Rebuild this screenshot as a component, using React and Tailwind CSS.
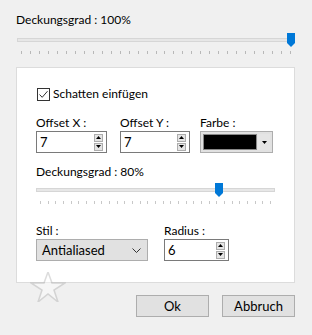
import React from "react";

function Slider({ width, thumbLeft, ticks, tickColor }) {
  const n = ticks;
  return (
    <div className="relative h-[22px]" style={{ width }}>
      <div className="absolute left-0 right-0 top-[5px] h-[4px] bg-[#e7e7e7] border border-[#d6d6d6]" />
      <svg className="absolute top-0" style={{ left: thumbLeft }} width="8" height="14" viewBox="0 0 8 14">
        <path d="M0 0H8V10L4 14L0 10Z" fill="#0078d7" />
      </svg>
      {Array.from({ length: n + 1 }).map((_, i) => (
        <div
          key={i}
          className={"absolute top-[18px] w-px h-[3px] " + tickColor}
          style={{ left: 4 + Math.round(((width - 9) * i) / n) }}
        />
      ))}
    </div>
  );
}

function Spinner() {
  return (
    <div className="flex flex-col gap-px">
      <div className="w-[9px] h-[8px] border border-[#adadad] bg-[#e5e5e5] flex items-center justify-center">
        <svg width="5" height="3" viewBox="0 0 5 3"><path d="M2.5 0L5 3H0Z" fill="#000" /></svg>
      </div>
      <div className="w-[9px] h-[8px] border border-[#adadad] bg-[#e5e5e5] flex items-center justify-center">
        <svg width="5" height="3" viewBox="0 0 5 3"><path d="M0 0H5L2.5 3Z" fill="#000" /></svg>
      </div>
    </div>
  );
}

function NumField({ label, value, width }) {
  return (
    <div className="flex flex-col">
      <span className="leading-4">{label}</span>
      <div
        className="h-[22px] border border-[#7a7a7a] bg-white flex items-center justify-between pl-[3px] pr-[3px]"
        style={{ width }}
      >
        <span className="leading-4 text-[13px]">{value}</span>
        <Spinner />
      </div>
    </div>
  );
}

export default function App() {
  return (
    <div className="relative w-[312px] h-[335px] bg-[#f0f0f0] text-[12px] text-black font-['Lato',sans-serif] pl-4 pt-3 overflow-hidden">
      <div className="leading-4">Deckungsgrad : 100%</div>
      <div className="mt-[5px] ml-px">
        <Slider width={278} thumbLeft={270} ticks={30} tickColor="bg-[#b8b8b8]" />
      </div>

      {/* Panel */}
      <div className="mt-[12px] w-[279px] h-[216px] bg-white border border-[#dcdcdc] pl-[19px] pt-[18px]">
        <div className="flex items-center gap-[3px] h-4 ml-px">
          <div className="w-[13px] h-[13px] border border-[#333] bg-white flex items-center justify-center">
            <svg width="11" height="11" viewBox="0 0 11 11">
              <path d="M1.5 5.5L4.2 8.3L9.5 2.2" fill="none" stroke="#333" strokeWidth="1" />
            </svg>
          </div>
          <span className="leading-4">Schatten einfügen</span>
        </div>

        <div className="flex mt-[13px]">
          <NumField label="Offset X :" value="7" width={71} />
          <div className="ml-[13px]">
            <NumField label="Offset Y :" value="7" width={70} />
          </div>
          <div className="ml-[10px] flex flex-col">
            <span className="leading-4">Farbe :</span>
            <div className="w-[73px] h-[22px] border border-[#adadad] bg-[#e1e1e1] flex p-[2px] gap-px">
              <div className="w-[54px] h-full bg-black border border-[#888]" />
              <div className="flex-1 flex items-center justify-center bg-[#e5e5e5]">
                <svg width="5" height="3" viewBox="0 0 5 3"><path d="M0 0H5L2.5 3Z" fill="#000" /></svg>
              </div>
            </div>
          </div>
        </div>

        <div className="leading-4 mt-[11px]">Deckungsgrad : 80%</div>
        <div className="mt-[3px]">
          <Slider width={239} thumbLeft={179} ticks={30} tickColor="bg-[#c8c8c8]" />
        </div>

        <div className="flex mt-[18px]">
          <div className="flex flex-col">
            <span className="leading-4">Stil :</span>
            <div className="w-[112px] h-[22px] border border-[#adadad] bg-[#e1e1e1] flex items-center justify-between pl-[5px] pr-[6px]">
              <span className="leading-4 text-[13px]">Antialiased</span>
              <svg width="9" height="5" viewBox="0 0 9 5">
                <path d="M0.5 0.5L4.5 4.5L8.5 0.5" fill="none" stroke="#333" strokeWidth="1" />
              </svg>
            </div>
          </div>
          <div className="ml-[16px]">
            <NumField label="Radius :" value="6" width={65} />
          </div>
        </div>
      </div>

      {/* watermark */}
      <svg className="absolute left-[30px] top-[272px] opacity-40" width="36" height="30" viewBox="0 0 36 30">
        <path d="M18 0L22 11L35 11L24 18L28 30L18 22L8 30L12 18L1 11L14 11Z" fill="#fff" stroke="#aaa" strokeWidth="1.5" />
      </svg>

      <div className="flex justify-end gap-[13px] mt-[12px] pr-[17px]">
        <button className="w-[73px] h-[22px] bg-[#e1e1e1] border border-[#adadad] leading-4 text-[13px]">Ok</button>
        <button className="w-[73px] h-[22px] bg-[#e1e1e1] border border-[#adadad] leading-4 text-[13px]">Abbruch</button>
      </div>
    </div>
  );
}
